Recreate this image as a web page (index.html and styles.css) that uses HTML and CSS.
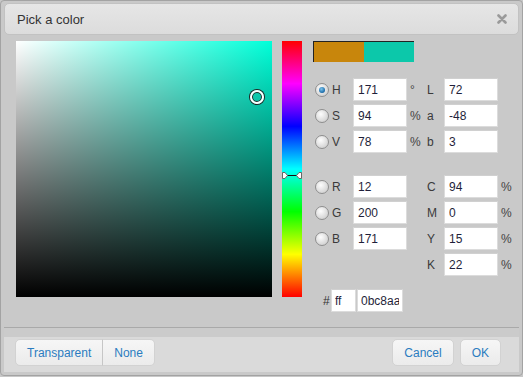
FILE: index.html
```html
<!DOCTYPE html>
<html lang="en">
<head>
  <meta charset="UTF-8">
  <meta name="viewport" content="width=device-width, initial-scale=1.0">
  <title>Pick a color</title>
  <link rel="stylesheet" href="styles.css">
</head>
<body>
  <div class="dialog">
    <div class="titlebar">
      <span class="title">Pick a color</span>
      <span class="close">
        <svg width="10" height="10" viewBox="0 0 10 10"><path d="M1.5 1.5 L8.5 8.5 M8.5 1.5 L1.5 8.5" stroke="#9a9a9a" stroke-width="2.6" stroke-linecap="round"/></svg>
      </span>
    </div>

    <div class="content">
      <div class="field">
        <span class="field-marker"></span>
      </div>
      <div class="hue">
        <span class="hue-marker">
          <svg width="20" height="9" viewBox="0 0 20 9">
            <line x1="5" y1="4.5" x2="15" y2="4.5" stroke="#111" stroke-width="1"/>
            <path d="M0.5 1.5 H3 L5.5 4.5 L3 7.5 H0.5 Z" fill="#fff" stroke="#666" stroke-width="1"/>
            <path d="M19.5 1.5 H17 L14.5 4.5 L17 7.5 H19.5 Z" fill="#fff" stroke="#666" stroke-width="1"/>
          </svg>
        </span>
      </div>

      <div class="controls">
        <div class="swatch"><span class="old"></span><span class="new"></span></div>

        <div class="grid">
          <span class="radio checked"></span><span class="lbl">H</span><input class="num" type="text" value="171"><span class="unit">&deg;</span>
          <span class="lbl">L</span><input class="num" type="text" value="72"><span class="unit"></span>

          <span class="radio"></span><span class="lbl">S</span><input class="num" type="text" value="94"><span class="unit">%</span>
          <span class="lbl">a</span><input class="num" type="text" value="-48"><span class="unit"></span>

          <span class="radio"></span><span class="lbl">V</span><input class="num" type="text" value="78"><span class="unit">%</span>
          <span class="lbl">b</span><input class="num" type="text" value="3"><span class="unit"></span>

          <span class="spacer"></span>

          <span class="radio"></span><span class="lbl">R</span><input class="num" type="text" value="12"><span class="unit"></span>
          <span class="lbl">C</span><input class="num" type="text" value="94"><span class="unit">%</span>

          <span class="radio"></span><span class="lbl">G</span><input class="num" type="text" value="200"><span class="unit"></span>
          <span class="lbl">M</span><input class="num" type="text" value="0"><span class="unit">%</span>

          <span class="radio"></span><span class="lbl">B</span><input class="num" type="text" value="171"><span class="unit"></span>
          <span class="lbl">Y</span><input class="num" type="text" value="15"><span class="unit">%</span>

          <span class="skip"></span>
          <span class="lbl">K</span><input class="num" type="text" value="22"><span class="unit">%</span>

          <span class="spacer"></span>

          <div class="hex">
            <span class="hash">#</span>
            <input class="alpha" type="text" value="ff">
            <input class="hexval" type="text" value="0bc8aa">
          </div>
        </div>
      </div>
    </div>

    <div class="footer">
      <div class="btn-group">
        <button class="btn left">Transparent</button><button class="btn right">None</button>
      </div>
      <div class="actions">
        <button class="btn">Cancel</button>
        <button class="btn">OK</button>
      </div>
    </div>
  </div>
</body>
</html>
```

FILE: styles.css
```css
* {
  box-sizing: border-box;
}

body {
  margin: 0;
  padding: 0;
  background-color: #c8c8c8;
  font-family: "Liberation Sans", Arial, sans-serif;
  font-size: 12px;
  color: #333;
}

.dialog {
  width: 523px;
  height: 376px;
  padding: 2px 3px 3px;
  background-color: #c9c9c9;
  border: 1px solid #a3a3a3;
  border-radius: 4px;
  display: flex;
  flex-direction: column;
}

.titlebar {
  height: 32px;
  display: flex;
  align-items: center;
  justify-content: space-between;
  padding: 0 11px 0 12px;
  background: linear-gradient(#e6e6e6, #dcdcdc);
  border: 1px solid #c2c2c2;
  border-radius: 5px;
}

.title {
  font-size: 13px;
  color: #333;
}

.close {
  display: flex;
}

.content {
  height: 292px;
  display: flex;
  padding: 6px 12px 0;
}

.field {
  position: relative;
  width: 256px;
  height: 256px;
  flex: none;
  background:
    linear-gradient(to top, #000, rgba(0, 0, 0, 0)),
    linear-gradient(to right, #fff, #00ffd9);
}

.field-marker {
  position: absolute;
  left: 234px;
  top: 49px;
  width: 14px;
  height: 14px;
  border: 2px solid #fff;
  border-radius: 50%;
  box-shadow: 0 0 0 1px #222, inset 0 0 0 1px #222;
}

.hue {
  position: relative;
  width: 20px;
  height: 256px;
  margin-left: 10px;
  flex: none;
  background: linear-gradient(#f00, #f0f 16.67%, #00f 33.33%, #0ff 50%, #0f0 66.67%, #ff0 83.33%, #f00);
}

.hue-marker {
  position: absolute;
  left: 0;
  top: 130px;
  display: flex;
}

.controls {
  margin-left: 11px;
}

.swatch {
  display: flex;
  width: 101px;
  height: 21px;
  border-top: 1px solid #222;
  border-left: 1px solid #222;
}

.swatch .old {
  width: 50px;
  background-color: #c8860c;
}

.swatch .new {
  width: 50px;
  background-color: #0cc8aa;
}

.grid {
  display: grid;
  grid-template-columns: 18px 22px 54px 19px 18px 54px 14px;
  grid-template-rows: 23px 23px 23px 16px 23px 23px 23px 23px 7px 23px;
  row-gap: 3px;
  margin-top: 16px;
  align-items: center;
}

.spacer {
  grid-column: 1 / -1;
}

.skip {
  grid-column: 1 / 5;
}

.radio {
  justify-self: center;
  width: 14px;
  height: 14px;
  border: 1px solid #8e8e8e;
  border-radius: 50%;
  background: radial-gradient(circle at 40% 35%, #fdfdfd, #d6d6d6 70%, #c4c4c4);
  position: relative;
}

.radio.checked::after {
  content: "";
  position: absolute;
  left: 3px;
  top: 3px;
  width: 6px;
  height: 6px;
  border-radius: 50%;
  background: radial-gradient(circle at 40% 35%, #7cc4ec, #1a6aa8 70%, #0d3f6e);
}

.lbl {
  padding-left: 1px;
  color: #3a3a3a;
}

.num,
.alpha,
.hexval {
  height: 23px;
  padding: 0 4px;
  border: 1px solid #dcdcdc;
  border-top-color: #d0d0d0;
  background-color: #fff;
  font-family: "Liberation Sans", Arial, sans-serif;
  font-size: 12px;
  color: #1f1f3a;
  outline: none;
}

.num {
  width: 54px;
}

.unit {
  padding-left: 3px;
  color: #444;
}

.grid .unit:last-child {
  padding-left: 1px;
}

.hex {
  grid-column: 1 / -1;
  display: flex;
  align-items: center;
  padding-left: 10px;
}

.hash {
  width: 8px;
  color: #333;
}

.alpha {
  width: 25px;
  padding: 0 3px;
}

.hexval {
  width: 46px;
  margin-left: 1px;
  padding: 0 3px;
}

.footer {
  flex: 1;
  display: flex;
  justify-content: space-between;
  align-items: flex-start;
  padding: 11px 18px 0 11px;
  border-top: 1px solid #a9a9a9;
  background: linear-gradient(#cbcbcb 0, #cbcbcb 9px, #dadada 9px);
}

.btn-group {
  display: flex;
}

.actions {
  display: flex;
  gap: 6px;
}

.btn {
  height: 27px;
  padding: 0 11px;
  background: linear-gradient(#f6f6f6, #ebebeb);
  border: 1px solid #d2d2d2;
  border-radius: 5px;
  font-family: "Liberation Sans", Arial, sans-serif;
  font-size: 12px;
  color: #2a7cc0;
  cursor: pointer;
}

.btn.left {
  border-radius: 5px 0 0 5px;
}

.btn.right {
  border-radius: 0 5px 5px 0;
  border-left: 1px solid #c6c6c6;
  margin-left: -1px;
}
```
